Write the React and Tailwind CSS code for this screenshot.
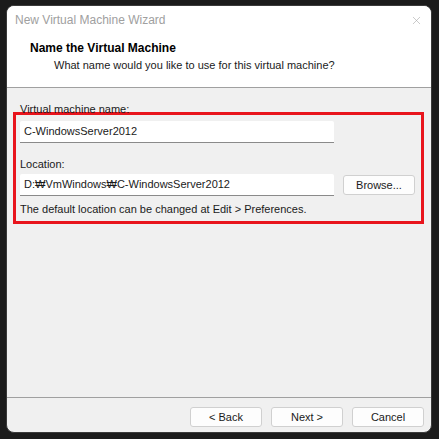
import { X } from "lucide-react";

function Btn({ children, className = "" }) {
  return (
    <button
      className={`h-[20px] w-[72px] rounded-[3px] border border-[#d0d0d0] bg-[#fdfdfd] text-[11px] text-[#1a1a1a] leading-none ${className}`}
    >
      {children}
    </button>
  );
}

function Field({ value }) {
  return (
    <div className="h-[22px] w-[314px] bg-white border-b border-[#8a8a8a] rounded-t-[2px] flex items-center pl-[4px] text-[11px] text-[#1a1a1a]">
      {value}
    </div>
  );
}

export default function App() {
  return (
    <div
      className="w-[439px] h-[439px] bg-[#1b1b1b] pt-[5px] pl-[6px] pr-[7px] pb-[6px]"
      style={{ fontFamily: '"Liberation Sans", "Noto Sans CJK KR", sans-serif' }}
    >
      <div className="h-full w-full rounded-[8px] overflow-hidden flex flex-col bg-[#f0f0f0] border border-[#3a3a3a]">
        <div className="bg-white">
          <div className="h-[28px] flex items-center justify-between pl-[8px] pr-[8px]">
            <span className="text-[12px] text-[#a0a0a0]">New Virtual Machine Wizard</span>
            <X size={13} strokeWidth={1.1} className="text-[#a8a8a8]" />
          </div>
          <div className="h-[53px] pl-[23px] pt-[6px]">
            <div className="text-[12px] font-bold text-black leading-[17px]">Name the Virtual Machine</div>
            <div className="text-[11px] text-[#1a1a1a] leading-[17px] pl-[24px]">
              What name would you like to use for this virtual machine?
            </div>
          </div>
        </div>
        <div className="h-px bg-[#a0a0a0]" />
        <div className="flex-1 pt-[14px] pl-[13px] pr-[9px]">
          <div className="text-[11px] text-[#1a1a1a] leading-[14px] -mb-[4px] relative z-10">
            Virtual machine name:
          </div>
          <div className="border-[3px] border-[#e8141c] -ml-[7px] pl-[4px] pt-[6px] pb-[6px] w-[411px] h-[112px]">
            <Field value="C-WindowsServer2012" />
            <div className="text-[11px] text-[#1a1a1a] mt-[13px] leading-[16px]">Location:</div>
            <div className="flex items-center mt-[2px] gap-[9px]">
              <Field value="D:₩VmWindows₩C-WindowsServer2012" />
              <Btn>Browse...</Btn>
            </div>
            <div className="text-[11px] text-[#1a1a1a] mt-[5px] leading-[16px]">
              The default location can be changed at Edit &gt; Preferences.
            </div>
          </div>
        </div>
        <div className="h-px bg-[#a0a0a0]" />
        <div className="h-[34px] flex items-start justify-end gap-[9px] pt-[9px] pr-[7px]">
          <Btn>&lt; Back</Btn>
          <Btn>Next &gt;</Btn>
          <Btn>Cancel</Btn>
        </div>
      </div>
    </div>
  );
}
